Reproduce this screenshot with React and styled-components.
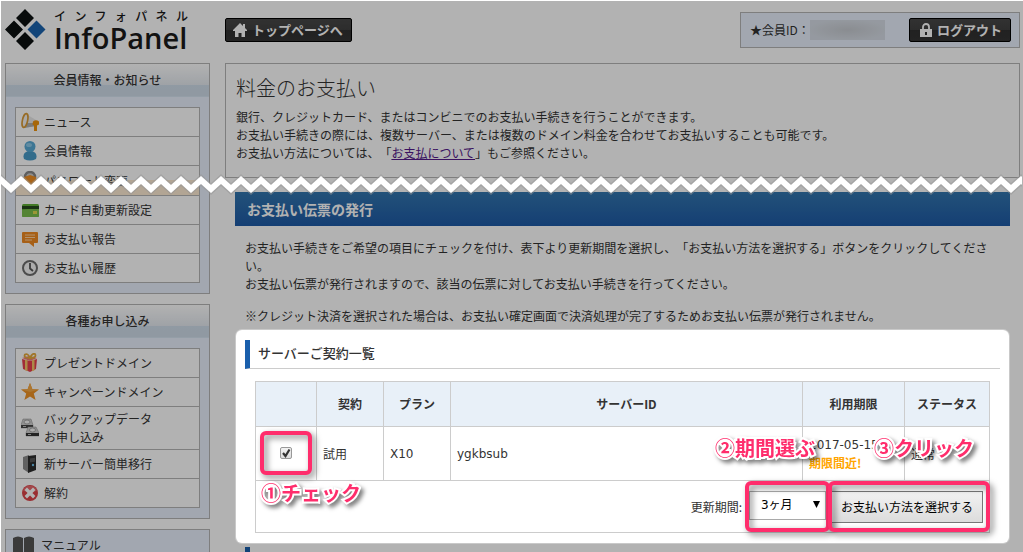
import React from 'react';
import styled, { createGlobalStyle } from "styled-components";

const GlobalStyle = createGlobalStyle`
  * {
    box-sizing: border-box;
  }
  body {
    margin: 0;
    background: #fff;
    color: #333;
    font: 12px/18px "Noto Sans CJK JP", sans-serif;
    text-spacing-trim: space-all;
  }
  h1, h2, h3, p, ul {
    margin: 0;
    padding: 0;
  }
`;

const Page = styled.div`
  position: relative;
  height: calc(100vh - 1px);
  margin: 1px 0 0 1px;
  padding: 0 3px 0 4px;
  overflow: hidden;
`;
const Header = styled.header`
  display: flex;
  height: 62px;
`;
const Logo = styled.a`
  display: flex;
  flex: none;
  gap: 8px;
  width: 205px;
  margin-right: 15px;
  padding-top: 8px;
  color: #1a1a1a;
  text-decoration: none;
`;
const LogoWords = styled.span`
  display: block;
  width: 134px;
`;
const LogoKana = styled.span`
  display: block;
  font-size: 12px;
  font-weight: 500;
  line-height: 14px;
  text-align: justify;
  text-align-last: justify;
`;
const LogoName = styled.span`
  display: block;
  font-family: "Open Sans", sans-serif;
  font-size: 29px;
  font-weight: 600;
  line-height: 30px;
`;
const HeaderRight = styled.div`
  display: flex;
  flex: 1;
  justify-content: space-between;
  align-items: flex-start;
`;
const DarkButton = styled.button`
  display: flex;
  align-items: center;
  gap: 5px;
  height: 24px;
  padding: 0 8px 0 7px;
  border: 1px solid #000;
  border-radius: 2px;
  background: linear-gradient(#484848, #404040 50%, #303030 50%, #343434);
  color: #fff;
  font: 700 13px/20px "Noto Sans CJK JP", sans-serif;
`;
const TopLink = styled.div`
  padding-top: 17px;
`;
const MemberBox = styled.div`
  display: flex;
  align-items: center;
  width: 280px;
  height: 36px;
  margin-top: 11px;
  padding: 0 8px 0 9px;
  border: 1px solid #b5b5b5;
  background: #e8f0fc;
  button {
    margin-left: auto;
    padding-left: 10px;
  }
`;
const MemberId = styled.span`
  width: 75px;
  height: 20px;
  background: radial-gradient(ellipse at center, #c6cad0, #d6dce5 75%);
`;

const Columns = styled.div`
  display: flex;
  align-items: flex-start;
  gap: 15px;
`;
const Sidebar = styled.nav`
  flex: none;
  width: 205px;
`;
const SideBox = styled.section`
  margin-bottom: 10px;
  border: 1px solid #b5b5b5;
  background: #e8f0fc;
`;
const SideTitle = styled.h2`
  height: 33px;
  border-bottom: 1px solid #d5e2f0;
  background: linear-gradient(#fff, #e4e9ef 65%, #cfddea 65%, #cfdbe8);
  font-size: 12px;
  font-weight: 500;
  line-height: 32px;
  text-align: center;
`;
const SideList = styled.ul`
  margin: 10px 9px;
  border: 1px solid #b5b5b5;
  list-style: none;
`;
const SideItem = styled.li`
  border-top: ${props => (props.$first ? 'none' : '1px solid #b5b5b5')};
  background: ${props => (props.$torn ? 'linear-gradient(#fff 14px, #ffecd5 14px)' : '#fff')};
`;
const SideLink = styled.a`
  display: flex;
  align-items: center;
  gap: 5px;
  min-height: ${props => (props.$torn ? '29px' : '28px')};
  padding: 3px 5px;
  color: #333;
  text-decoration: none;
  svg {
    flex: none;
  }
`;
const ManualLink = styled.a`
  display: flex;
  align-items: center;
  gap: 7px;
  height: 30px;
  padding-left: 7px;
  color: #333;
  text-decoration: none;
`;

const Main = styled.main`
  flex: 1;
  min-width: 0;
`;
const Intro = styled.section`
  margin-bottom: 14px;
  padding: 9px 10px 15px;
  border: 1px solid #b5b5b5;
  h1 {
    margin-bottom: 5px;
    font-size: 20px;
    font-weight: 300;
    line-height: 30px;
  }
  a {
    color: #551a8b;
  }
`;
const Section = styled.section`
  margin: 0 10px;
`;
const BlueTitle = styled.h2`
  height: 34px;
  padding-left: 12px;
  background: linear-gradient(#3275ae, #1e5aa6);
  color: #fff;
  font-size: 14px;
  font-weight: 700;
  line-height: 34px;
`;
const Guide = styled.div`
  padding: 13px 10px 5px;
  p + p {
    margin-top: 14px;
  }
`;
// the huge spread darkens everything outside the panel
const Spotlight = styled.div`
  position: relative;
  z-index: 1;
  margin: 0 1px;
  padding: 10px 9px;
  border-radius: 6px;
  background: #fff;
  box-shadow: 0 0 0 1px rgba(255, 255, 255, 0.3), 0 0 0 3000px rgba(0, 0, 0, 0.3);
`;
const SubTitle = styled.h3`
  height: 29px;
  padding-left: 8px;
  border-left: 5px solid #1a5fac;
  border-bottom: 1px solid #ccc;
  font-size: 13px;
  font-weight: 500;
  line-height: 26px;
`;
const NextTitle = styled(SubTitle)`
  margin: 4px 10px 0;
`;
const TableWrap = styled.div`
  padding: 12px 10px 0;
`;
const Table = styled.table`
  width: 100%;
  border-collapse: collapse;
  table-layout: fixed;
`;
const Th = styled.th`
  width: ${props => props.$width || 'auto'};
  height: 45px;
  padding: 0 6px;
  border: 1px solid #ccc;
  background: #e8f0f8;
  font-weight: 700;
`;
const Td = styled.td`
  height: 54px;
  padding: 0 6px;
  border: 1px solid #ccc;
  text-align: ${props => (props.$center ? 'center' : 'left')};
`;
const ActionCell = styled(Td)`
  height: 52px;
`;
const Value = styled.span`
  font-family: "DejaVu Sans", sans-serif;
  white-space: nowrap;
`;
const Soon = styled.strong`
  display: block;
  color: #ffa500;
`;
const Actions = styled.div`
  display: flex;
  justify-content: flex-end;
  align-items: center;
  height: 32px;
  > label {
    margin-right: 7px;
  }
`;
const Target = styled.div`
  position: relative;
  display: inline-block;
  height: ${props => props.$height || 'auto'};
  margin-right: ${props => props.$gap || '0'};
`;
const CheckBox = styled.input`
  display: block;
  appearance: none;
  width: 12px;
  height: 12px;
  margin: 0;
  border: 1px solid #999;
  border-radius: 2px;
  background: linear-gradient(#f2f2f2, #dcdcdc);
`;
const CheckMark = styled.svg`
  position: absolute;
  top: 0;
  left: 0;
  pointer-events: none;
`;
const Select = styled.select`
  display: block;
  appearance: none;
  width: 77px;
  height: 29px;
  padding: 0 11px;
  border: 1px solid #a9a9a9;
  background: #fff;
  color: #000;
  font: 12px/18px "DejaVu Sans", "Noto Sans CJK JP", sans-serif;
`;
const Arrow = styled.svg`
  position: absolute;
  top: 10px;
  right: 6px;
  pointer-events: none;
`;
const SubmitButton = styled.button`
  display: block;
  height: 32px;
  padding: 0 9px;
  border: 1px solid #777;
  background: linear-gradient(#f2f2f2, #dcdcdc);
  color: #000;
  font: 12px/18px "Noto Sans CJK JP", sans-serif;
  white-space: nowrap;
`;
const Ring = styled.span`
  position: absolute;
  inset: ${props => props.$inset};
  border: 4px solid #ff2d6c;
  border-radius: 6px;
  filter: drop-shadow(3px 3px 3px rgba(0, 0, 0, 0.5));
  pointer-events: none;
`;
const Callout = styled.span`
  position: absolute;
  z-index: 2;
  top: ${props => props.$top};
  left: ${props => props.$left};
  color: #ff2d6c;
  font-size: 20px;
  font-weight: 700;
  line-height: 20px;
  white-space: nowrap;
  -webkit-text-stroke: 4px #fff;
  paint-order: stroke fill;
  filter: drop-shadow(3px 3px 2px rgba(0, 0, 0, 0.5));
  pointer-events: none;
`;
const TearLine = styled.svg`
  position: absolute;
  z-index: 3;
  top: 166px;
  left: 0;
  width: calc(100% - 1px);
  height: 36px;
  pointer-events: none;
`;

function Icon({ children }) {
  return <svg width="18" height="20" viewBox="0 0 18 20" aria-hidden="true">{children}</svg>;
}

const icons = {
  news: (
    <Icon>
      <path d="M5 2 15 8v6L3 16z" fill="#e8e8e8" />
      <path d="M4 11 15 11v3L3 16z" fill="#b0b0b0" />
      <ellipse cx="4" cy="8.500" rx="2.600" ry="7" fill="#f2f2f2" stroke="#d99a35" strokeWidth="1.600" transform="rotate(12 4 8.500)" />
      <path d="M12 9.500q3-2.500 6 0v3l-2 1v5.500h-3v-5.500l-1.500-1z" fill="#f0940f" />
    </Icon>
  ),
  member: (
    <Icon>
      <path d="M3 18q-2-6 4-8h4q6 2 4 8-6 3-12 0z" fill="#4a9bc8" />
      <circle cx="9" cy="5.500" r="5.500" fill="#58a9d4" />
      <ellipse cx="8" cy="4" rx="3" ry="2" fill="#8cc9e8" />
    </Icon>
  ),
  password: (
    <Icon>
      <circle cx="9" cy="6" r="5" fill="#ccc" stroke="#888" strokeWidth="2.500" />
      <path d="m3 6 6-2 6 2 1 6-7 6-7-6z" fill="#f39021" />
    </Icon>
  ),
  card: (
    <Icon>
      <rect x="1" y="4" width="17" height="13" rx="1.500" fill="#5fae35" />
      <path d="M1 10 18 7v8.500q0 1.500-1.500 1.500h-14Q1 17 1 15.500z" fill="#79bd4b" />
      <rect x="1" y="6" width="17" height="3" fill="#26481c" />
      <rect x="12" y="11" width="4" height="3" fill="#dfd94e" />
    </Icon>
  ),
  report: (
    <Icon>
      <path d="M2 3h14q1 0 1 1v9q0 1-1 1h-3v4l-5-4H2q-1 0-1-1V4q0-1 1-1z" fill="#f08a22" />
      <path d="M4 6h10M4 8.500h10M4 11h7" stroke="#ffd3a0" strokeWidth="1" />
    </Icon>
  ),
  history: (
    <Icon>
      <circle cx="9" cy="10" r="7" fill="#f6f6f6" stroke="#6d6d6d" strokeWidth="2" />
      <path d="M9 5v5.500l3 2.500" fill="none" stroke="#555" strokeWidth="1.800" />
    </Icon>
  ),
  gift: (
    <Icon>
      <path d="m1 6 8 2 7-2-1 10-6 3-7-3z" fill="#e8404e" />
      <path d="M1 5 8 3l8 2-7 3z" fill="#f4777a" />
      <path d="m4 6.500 2.500.5v11l-2.500-.8zM11 7l2.500-.6v10.800l-2.500 1z" fill="#f6c667" />
      <path d="M9 5Q2 5 4 1.500 7 0 9 5q2-5 5-4 2 4-5 4z" fill="none" stroke="#e6a93c" strokeWidth="1.800" />
    </Icon>
  ),
  star: (
    <Icon>
      <path d="m9 1 2.400 6.200L18 7.500l-5.200 4.100L14.600 18 9 14.400 3.400 18l1.800-6.400L0 7.500l6.600-.3z" fill="#ef9226" />
      <path d="m9 1 2.400 6.200L18 7.500 9 10 0 7.500l6.600-.3z" fill="#f5a947" />
    </Icon>
  ),
  disk: (
    <Icon>
      <path d="M2 1h8l2 6v3H0V7z" fill="#d0d0d0" stroke="#888" strokeWidth=".5" />
      <path d="M0 7h12v3H0z" fill="#444" />
      <ellipse cx="6" cy="4" rx="3" ry="2" fill="#f5f5f5" stroke="#888" strokeWidth=".7" />
      <path d="M7 9h8l3 6v3H5v-3z" fill="#d0d0d0" stroke="#888" strokeWidth=".5" />
      <path d="M5 15h13v3H5z" fill="#333" />
      <path d="M7 16.500h3M2 8.500h3" stroke="#bbb" />
      <ellipse cx="11.500" cy="12" rx="3" ry="2" fill="#f5f5f5" stroke="#888" strokeWidth=".7" />
    </Icon>
  ),
  server: (
    <Icon>
      <path d="m2 3 6-2v18l-6-4z" fill="#8a8a8a" />
      <path d="m7 2 8-1v15l-8 3z" fill="#2b2b2b" />
      <path d="m9 4.500 5-.8v4l-5 .8z" fill="#555" />
      <circle cx="12" cy="11" r="1.200" fill="#6fc0ea" />
    </Icon>
  ),
  cancel: (
    <Icon>
      <circle cx="9" cy="10" r="8" fill="#dd4248" />
      <path d="M2 7.500a7.500 7.500 0 0 1 14 0q-7 4-14 0z" fill="#e9686c" />
      <path d="m6 7 6 6m0-6-6 6" stroke="#fff" strokeWidth="3.400" strokeLinecap="square" />
    </Icon>
  ),
};

const infoLinks = [
  { icon: 'news', text: 'ニュース' },
  { icon: 'member', text: '会員情報' },
  { icon: 'password', text: 'パスワード変更', torn: true },
  { icon: 'card', text: 'カード自動更新設定' },
  { icon: 'report', text: 'お支払い報告' },
  { icon: 'history', text: 'お支払い履歴' },
];

const applyLinks = [
  { icon: 'gift', text: 'プレゼントドメイン' },
  { icon: 'star', text: 'キャンペーンドメイン' },
  { icon: 'disk', text: <>バックアップデータ<br />お申し込み</> },
  { icon: 'server', text: '新サーバー簡単移行' },
  { icon: 'cancel', text: '解約' },
];

function SideMenu(props) {
  return (
    <SideBox>
      <SideTitle>{props.title}</SideTitle>
      <SideList>
        {props.links.map((link, index) => (
          <SideItem key={link.icon} $first={index === 0} $torn={link.torn}>
            <SideLink href="#" $torn={link.torn}>
              {icons[link.icon]}
              <span>{link.text}</span>
            </SideLink>
          </SideItem>
        ))}
      </SideList>
    </SideBox>
  );
}

function PageHeader() {
  return (
    <Header>
      <Logo href="#">
        <svg width="41" height="41" viewBox="0 0 41 41" aria-hidden="true">
          <path d="m20 0 9 9-9 9-9-9zM9 11.500l9 9-9 9-9-9zM20 23l9 9-9 9-9-9z" fill="#0c1010" />
          <path d="m31.500 11.500 9 9-9 9-9-9z" fill="#1c63ae" />
        </svg>
        <LogoWords>
          <LogoKana>インフォパネル</LogoKana>
          <LogoName>InfoPanel</LogoName>
        </LogoWords>
      </Logo>
      <HeaderRight>
        <TopLink>
          <DarkButton type="button">
            <svg width="14" height="14" viewBox="0 0 14 14" aria-hidden="true">
              <path d="M7 0 0 7v1h2v6h3.500v-4h3v4H12V8h2V7l-2-2V1h-2v2z" fill="#fff" />
            </svg>
            トップページへ
          </DarkButton>
        </TopLink>
        <MemberBox>
          ★会員ID：
          <MemberId />
          <DarkButton type="button">
            <svg width="12" height="14" viewBox="0 0 12 14" aria-hidden="true">
              <path d="M3 7V4a3 3 0 0 1 6 0v3" fill="none" stroke="#fff" strokeWidth="1.800" />
              <rect x="0" y="6" width="12" height="8" fill="#fff" />
              <path d="M5 9h2v3H5z" fill="#333" />
            </svg>
            ログアウト
          </DarkButton>
        </MemberBox>
      </HeaderRight>
    </Header>
  );
}

function ContractTable() {
  return (
    <Table>
      <thead>
        <tr>
          <Th $width="61px" />
          <Th $width="67px">契約</Th>
          <Th $width="67px">プラン</Th>
          <Th>サーバーID</Th>
          <Th $width="102px">利用期限</Th>
          <Th $width="85px">ステータス</Th>
        </tr>
      </thead>
      <tbody>
        <tr>
          <Td $center>
            <Target>
              <CheckBox type="checkbox" defaultChecked aria-label="試用" />
              <CheckMark width="12" height="12" viewBox="0 0 12 12">
                <path d="m3 6 2.500 3L9.500 2.500" fill="none" stroke="#333" strokeWidth="2.200" />
              </CheckMark>
              <Ring $inset="-16px -20px" />
              <Callout $top="36px" $left="-19px">①チェック</Callout>
            </Target>
          </Td>
          <Td>試用</Td>
          <Td><Value>X10</Value></Td>
          <Td><Value>ygkbsub</Value></Td>
          <Td>
            <Value>2017-05-15</Value>
            <Soon>期限間近!</Soon>
          </Td>
          <Td>通常</Td>
        </tr>
        <tr>
          <ActionCell colSpan="6">
            <Actions>
              <label htmlFor="period">更新期間:</label>
              <Target $height="32px" $gap="5px">
                <Select id="period" defaultValue="3">
                  <option value="3">3ヶ月</option>
                  <option value="6">6ヶ月</option>
                  <option value="12">12ヶ月</option>
                </Select>
                <Arrow width="7" height="7" viewBox="0 0 7 7">
                  <path d="M0 0h7L3.500 7z" fill="#000" />
                </Arrow>
                <Ring $inset="-10px -4px -9px" />
                <Callout $top="-53px" $left="-34px">②期間選ぶ</Callout>
              </Target>
              <Target $height="32px">
                <SubmitButton type="button">お支払い方法を選択する</SubmitButton>
                <Ring $inset="-10px -7px -9px -3px" />
                <Callout $top="-53px" $left="43px">③クリック</Callout>
              </Target>
            </Actions>
          </ActionCell>
        </tr>
      </tbody>
    </Table>
  );
}

function Tear() {
  const zigzag = 'M-20 13 -10 22 0 13 10 22 20 13 30 22 40 13';
  return (
    <TearLine aria-hidden="true">
      <defs>
        <pattern id="zigzag" width="20" height="36" patternUnits="userSpaceOnUse">
          <path d={zigzag} fill="none" stroke="rgba(150, 150, 150, 0.5)" strokeWidth="9" />
          <path d={zigzag} fill="none" stroke="#fff" strokeWidth="6" />
        </pattern>
      </defs>
      <rect width="100%" height="36" fill="url(#zigzag)" />
    </TearLine>
  );
}

function App() {
  return (
    <Page>
      <GlobalStyle />
      <PageHeader />
      <Columns>
        <Sidebar>
          <SideMenu title="会員情報・お知らせ" links={infoLinks} />
          <SideMenu title="各種お申し込み" links={applyLinks} />
          <SideBox>
            <ManualLink href="#">
              <svg width="21" height="18" viewBox="0 0 21 18" aria-hidden="true">
                <path d="M0 2q5-3 10 0v15q-5-2-10 0zM11 2q5-3 10 0v15q-5-2-10 0z" fill="#555" />
              </svg>
              マニュアル
            </ManualLink>
          </SideBox>
        </Sidebar>
        <Main>
          <Intro>
            <h1>料金のお支払い</h1>
            <p>
              銀行、クレジットカード、またはコンビニでのお支払い手続きを行うことができます。<br />
              お支払い手続きの際には、複数サーバー、または複数のドメイン料金を合わせてお支払いすることも可能です。<br />
              お支払い方法については、「<a href="#">お支払について</a>」もご参照ください。
            </p>
          </Intro>
          <Section>
            <BlueTitle>お支払い伝票の発行</BlueTitle>
            <Guide>
              <p>
                お支払い手続きをご希望の項目にチェックを付け、表下より更新期間を選択し、「お支払い方法を選択する」ボタンをクリックしてください。<br />
                お支払い伝票が発行されますので、該当の伝票に対してお支払い手続きを行ってください。
              </p>
              <p>※クレジット決済を選択された場合は、お支払い確定画面で決済処理が完了するためお支払い伝票が発行されません。</p>
            </Guide>
            <Spotlight>
              <SubTitle>サーバーご契約一覧</SubTitle>
              <TableWrap>
                <ContractTable />
              </TableWrap>
            </Spotlight>
            <NextTitle />
          </Section>
        </Main>
      </Columns>
      <Tear />
    </Page>
  );
}

export default App;
